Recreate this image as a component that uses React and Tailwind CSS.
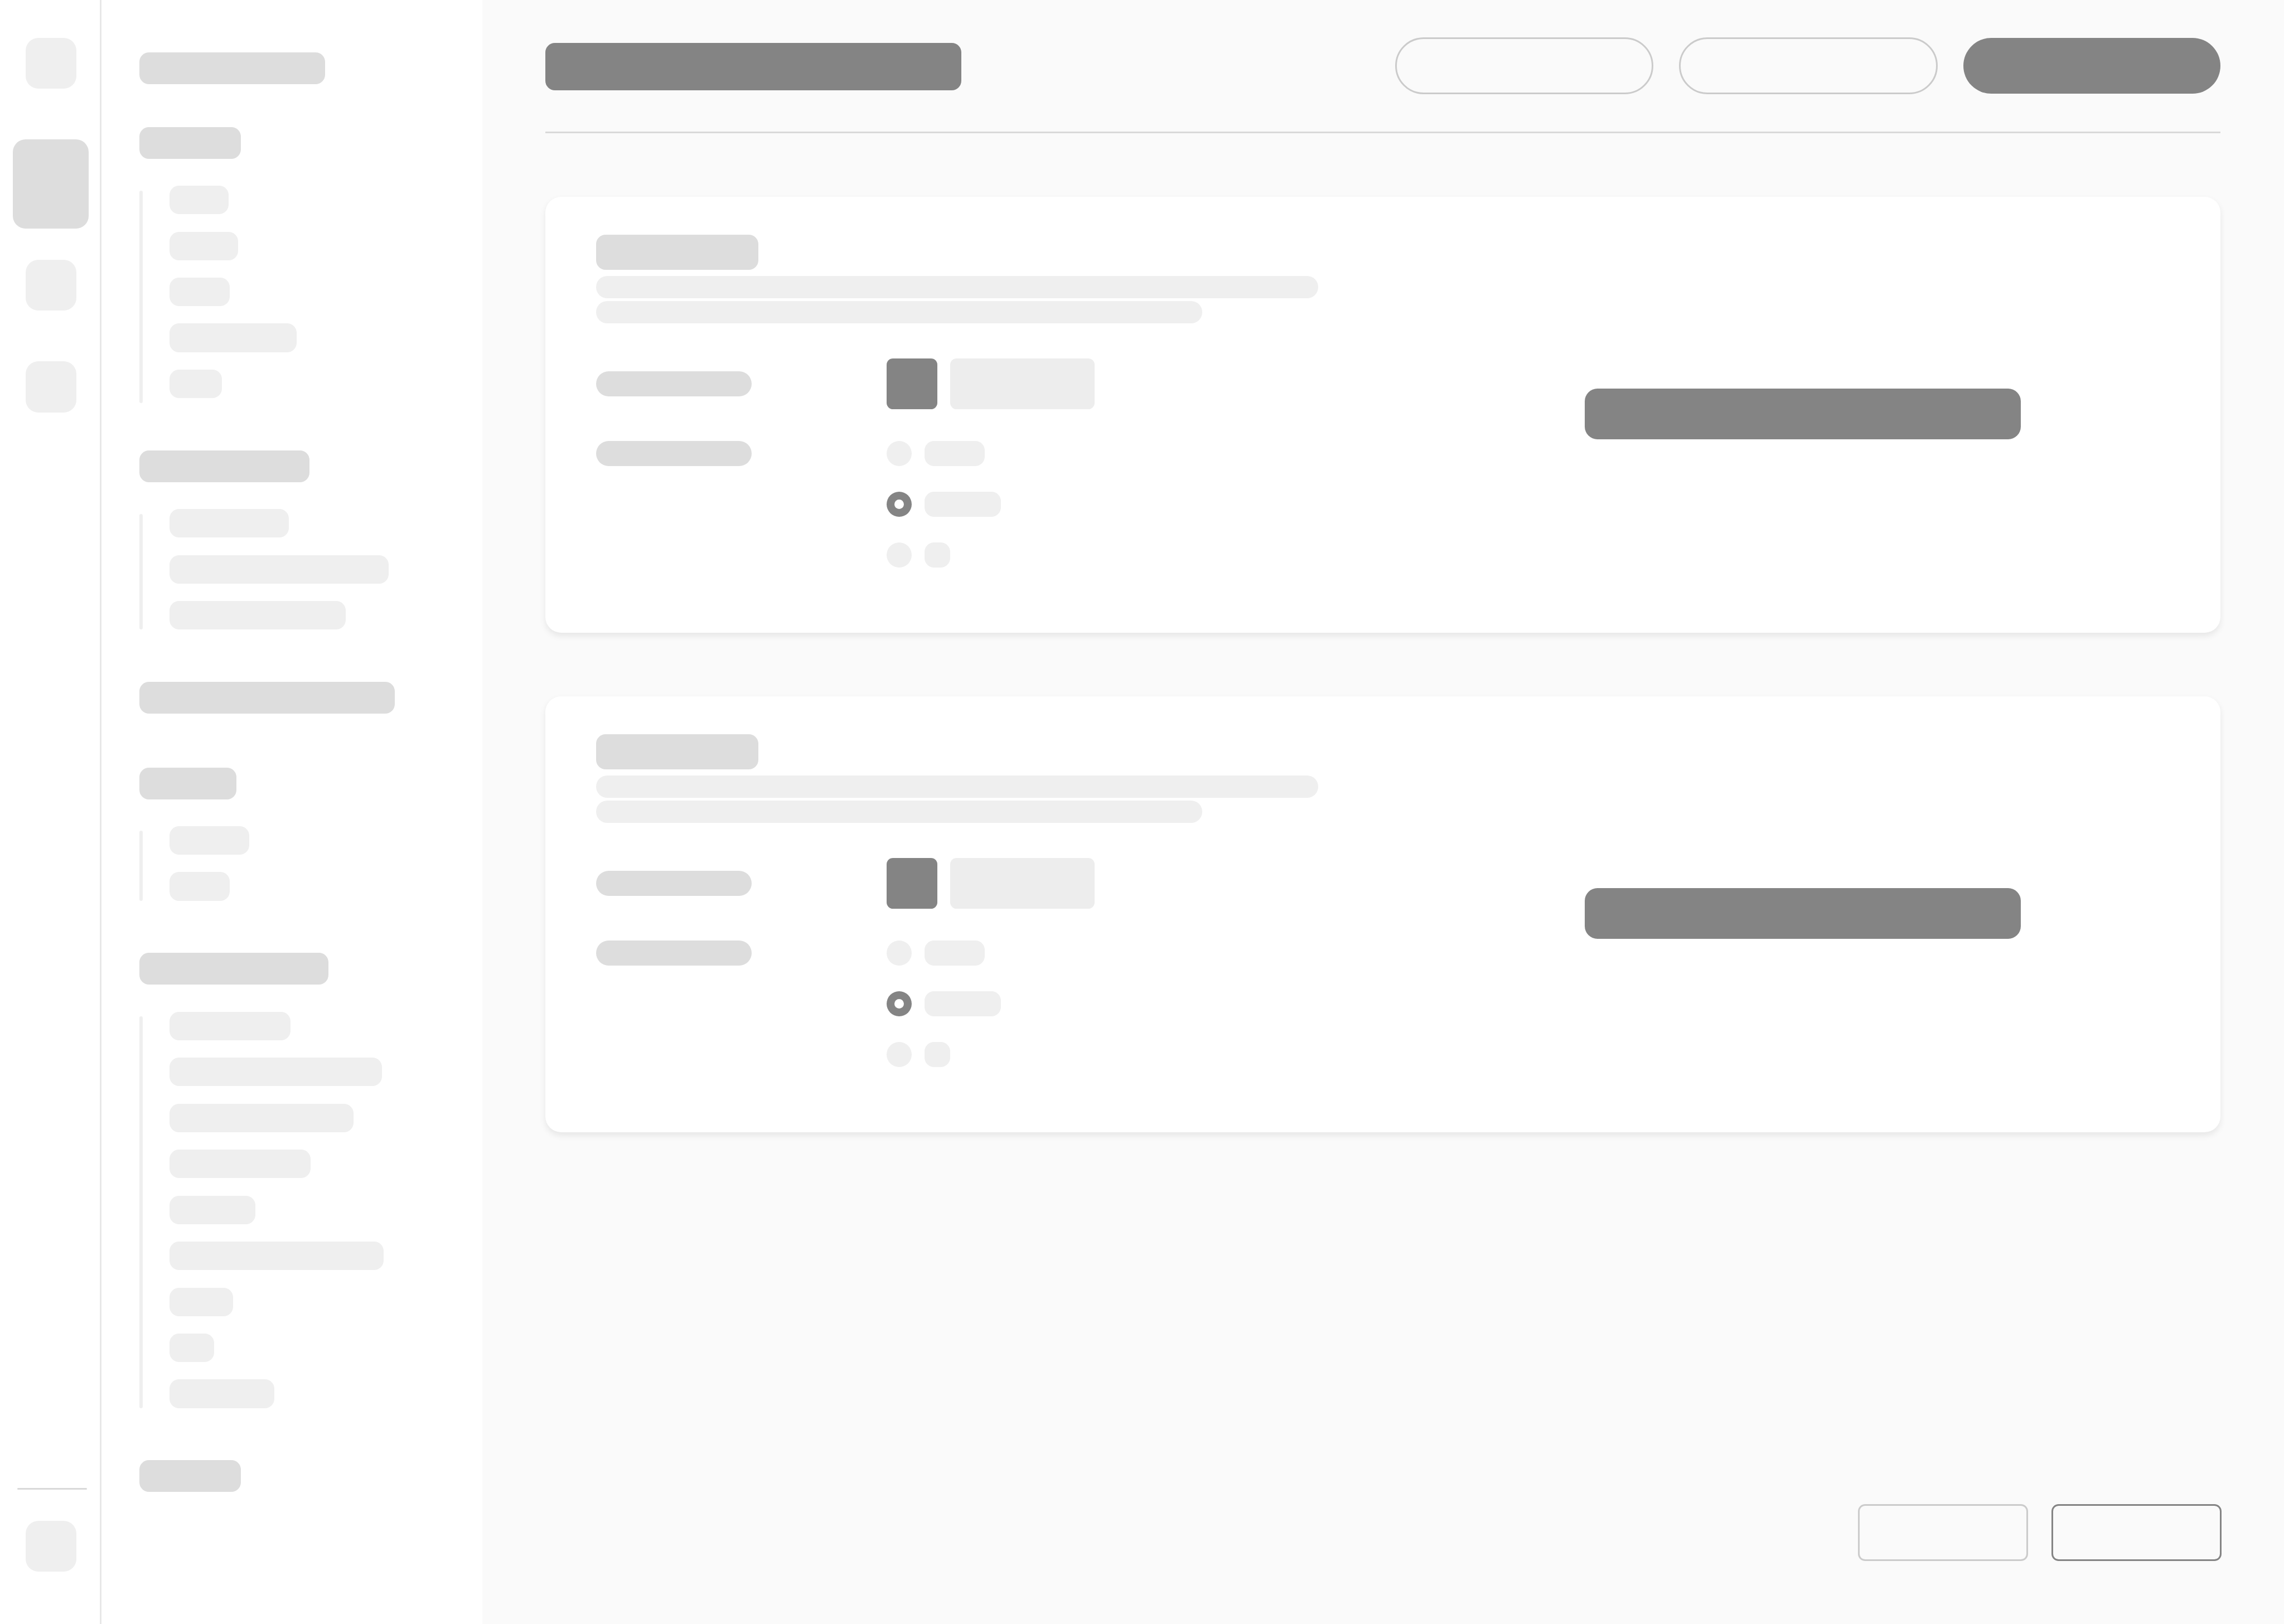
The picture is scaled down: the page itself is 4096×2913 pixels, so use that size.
import React from "react";

const sections = [
  { width: 117, space: 27, items: [] },
  { width: 64, space: 33, items: [37, 43, 38, 80, 33] },
  { width: 107, space: 33, items: [75, 138, 111] },
  { width: 161, space: 34, items: [] },
  { width: 61, space: 33, items: [50, 38] },
  { width: 119, space: 33, items: [76, 134, 116, 89, 54, 135, 40, 28, 66] },
  { width: 64, space: 0, items: [] },
];

const options = [
  { width: 38, checked: false },
  { width: 48, checked: true },
  { width: 16, checked: false },
];

const Rail = () => (
  <nav className="flex w-16 shrink-0 flex-col items-center border-r-[1.06px] border-[#e8e8e8] bg-white pt-6 pb-[33px] pl-[1.06px]">
    <div className="size-8 rounded-lg bg-[#efefef]" />
    <div className="mt-8 h-14 w-12 rounded-lg bg-[#dddddd]" />
    <div className="mt-5 size-8 rounded-lg bg-[#efefef]" />
    <div className="mt-8 size-8 rounded-lg bg-[#efefef]" />
    <div className="mt-auto ml-0.5 h-px w-11 rounded-full bg-[#d9d9d9]" />
    <div className="mt-5 size-8 rounded-lg bg-[#efefef]" />
  </nav>
);

const Section = ({ width, space, items, first }) => (
  <div style={{ marginBottom: space }}>
    <div className="h-5 rounded-md bg-[#dddddd]" style={{ width }} />
    {items.length > 0 && (
      <div className="mt-[17px] flex gap-[17px]">
        {/* the first guide line hangs slightly below its list */}
        <div className={first ? "mt-[3px] -mb-[3px] w-0.5 rounded-full bg-[#efefef]" : "mt-[3px] w-0.5 rounded-full bg-[#efefef]"} />
        <div className="flex flex-col gap-[11px]">
          {items.map((item, i) => (
            <div key={i} className="h-[18px] rounded-md bg-[#efefef]" style={{ width: item }} />
          ))}
        </div>
      </div>
    )}
  </div>
);

const Sidebar = () => (
  <aside className="w-60 shrink-0 bg-white pt-[33.1px] pl-6">
    {sections.map((section, i) => (
      <Section key={i} first={i === 1} {...section} />
    ))}
  </aside>
);

const Header = () => (
  <header className="flex h-[84px] items-center border-b-[1.06px] border-[#d9d9d9]">
    <div className="mt-px h-[30px] w-[262px] rounded-md bg-[#848484]" />
    <div className="ml-auto flex items-center">
      <div className="mr-4 h-9 w-[163px] rounded-full border-[1.06px] border-[#cbcbcb]" />
      <div className="mr-[16.5px] h-9 w-[163px] rounded-full border-[1.06px] border-[#cbcbcb]" />
      <div className="h-[35px] w-[162px] rounded-full bg-[#848484]" />
    </div>
  </header>
);

const Card = () => (
  <section className="flex h-[275px] rounded-[10px] bg-white pt-6 pl-8 shadow-[0_2px_4px_rgba(0,0,0,0.08)]">
    <div className="w-[623px]">
      <div className="h-[22px] w-[102px] rounded-md bg-[#dddddd]" />
      <div className="mt-1 h-3.5 w-[455px] rounded-full bg-[#efefef]" />
      <div className="mt-0.5 h-3.5 w-[382px] rounded-full bg-[#efefef]" />

      <div className="mt-[22px] flex items-center">
        <div className="mr-[85px] h-4 w-[98px] rounded-full bg-[#dddddd]" />
        <div className="mr-2 size-8 rounded bg-[#848484]" />
        <div className="h-8 w-[91px] rounded bg-[#ededed]" />
      </div>

      <div className="mt-5 flex">
        <div className="mr-[85px] h-4 w-[98px] rounded-full bg-[#dddddd]" />
        <div className="flex flex-col gap-4">
          {options.map(({ width, checked }) => (
            <div key={width} className="flex gap-2">
              {checked ? (
                <div className="flex size-4 items-center justify-center rounded-full bg-[#848484]">
                  <div className="size-1.5 rounded-full bg-white" />
                </div>
              ) : (
                <div className="size-4 rounded-full bg-[#efefef]" />
              )}
              <div className="h-4 rounded-md bg-[#efefef]" style={{ width }} />
            </div>
          ))}
        </div>
      </div>
    </div>
    <div className="mt-[97px] h-8 w-[275px] rounded-lg bg-[#848484]" />
  </section>
);

const App = () => {
  return (
    <div className="h-screen overflow-hidden">
      <div className="flex h-[1024.2px] w-[1440px] [zoom:2.844444]">
        <Rail />
        <Sidebar />
        <main className="flex grow flex-col bg-[#fafafa] px-10">
          <Header />
          <div className="mt-10 flex flex-col gap-10">
            <Card />
            <Card />
          </div>
          <footer className="mt-auto -mr-[0.5px] mb-[39.7px] flex justify-end gap-[15px]">
            <div className="h-9 w-[107px] rounded-[4.5px] border-[1.06px] border-[#cbcbcb]" />
            <div className="h-9 w-[107px] rounded-[4.5px] border-[1.06px] border-[#848484]" />
          </footer>
        </main>
      </div>
    </div>
  );
};

export default App;
